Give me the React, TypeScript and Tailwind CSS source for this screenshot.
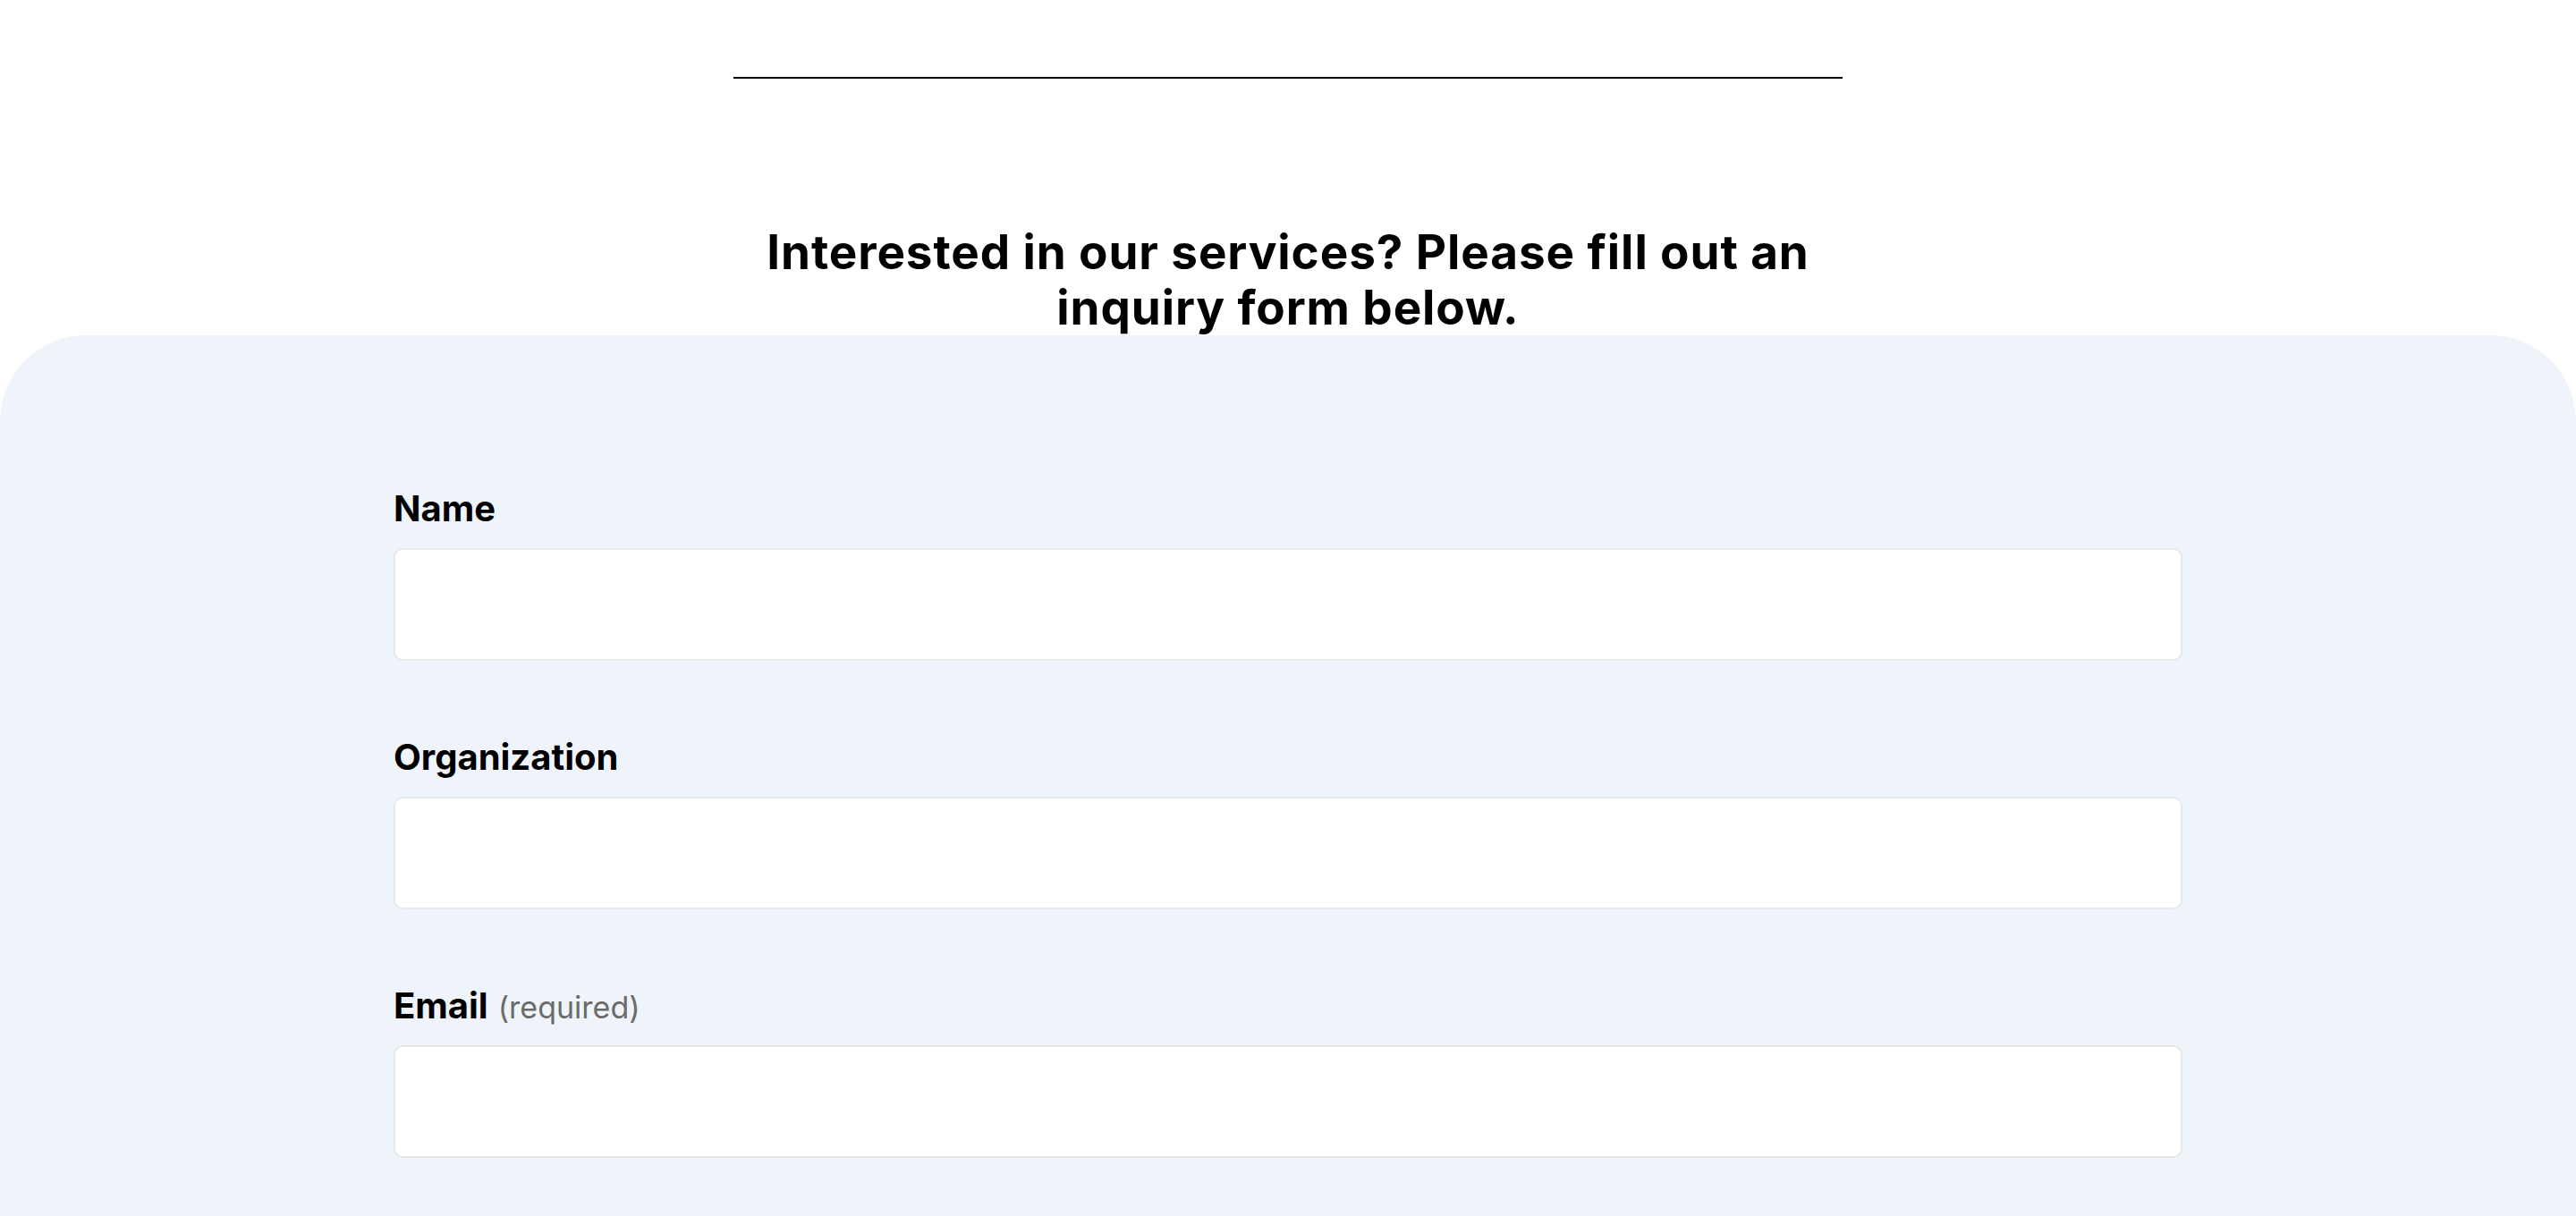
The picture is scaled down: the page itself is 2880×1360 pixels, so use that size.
const fields = [
  { label: "Name", required: false },
  { label: "Organization", required: false },
  { label: "Email", required: true },
];

function Field({ label, required }: { label: string; required: boolean }) {
  return (
    <div className="flex flex-col">
      <label className="mb-5 text-[40px] leading-[48px] font-bold text-black">
        {label}
        {required && (
          <span className="ml-[11px] text-[34px] leading-[40px] font-normal text-[#6b6b6b]">(required)</span>
        )}
      </label>
      <input
        type="text"
        className="h-[126px] w-full rounded-[10px] border-2 border-[#e8e9eb] bg-white px-6 text-[36px] outline-none"
      />
    </div>
  );
}

export default function App() {
  return (
    <div className="min-h-screen bg-white font-['Inter','Noto_Sans',sans-serif]">
      {/* divider + heading */}
      <div className="flex flex-col items-center pt-[86px]">
        <div className="h-[2px] w-[1240px] bg-black" />
        <h2 className="mt-[163px] max-w-[1240px] text-center text-[53px] leading-[62px] font-bold tracking-[0.9px] text-black">
          Interested in our services? Please fill out an inquiry form below.
        </h2>
      </div>

      {/* form panel */}
      <div className="relative rounded-t-[96px] bg-[#eff4fb] pt-[170px] pb-[200px]">
        <form className="mx-auto flex w-[2000px] flex-col gap-[84px]">
          {fields.map((f) => (
            <Field key={f.label} label={f.label} required={f.required} />
          ))}
        </form>
      </div>
    </div>
  );
}
